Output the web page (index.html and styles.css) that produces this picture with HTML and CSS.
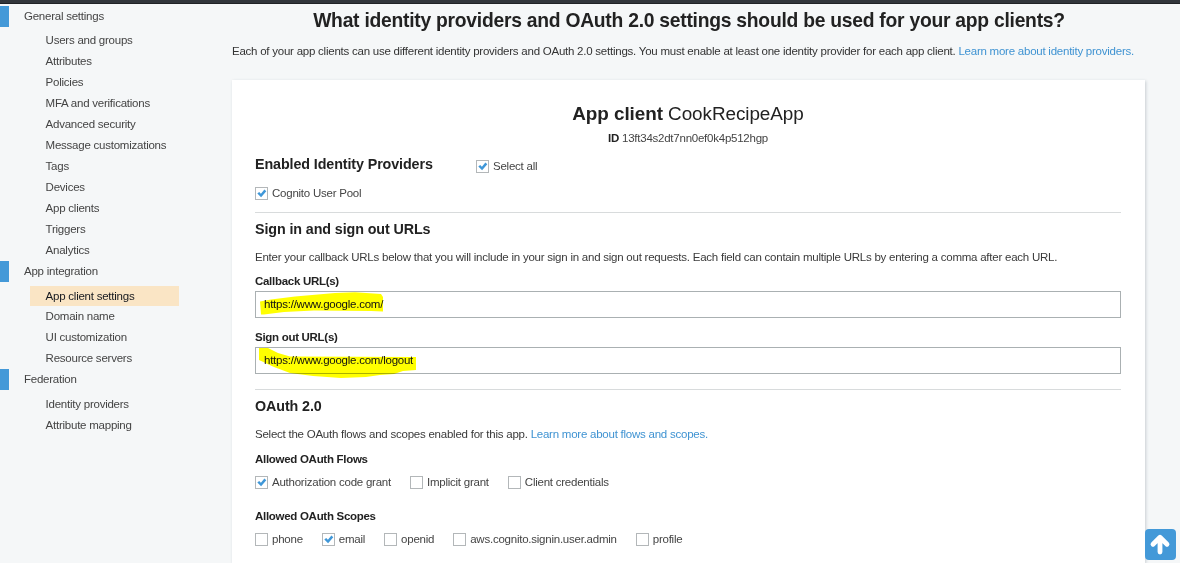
FILE: index.html
```html
<!DOCTYPE html>
<html lang="en">
<head>
<meta charset="utf-8">
<title>App client settings</title>
<link rel="stylesheet" href="styles.css">
</head>
<body>
<svg class="sprite" aria-hidden="true"><symbol id="check" viewBox="0 0 11 11"><path d="M1.300 5.600 3.200 3.900l1.700 1.800L8.400 1.500l1.900 1.700L5.100 9.200z" fill="#3f97d8"/></symbol></svg>
<header class="topbar"></header>
<div class="layout">
  <nav class="sidebar">
    <section class="group">
      <h2 class="group-title">General settings</h2>
      <ul class="menu">
        <li class="item">Users and groups</li>
        <li class="item">Attributes</li>
        <li class="item">Policies</li>
        <li class="item">MFA and verifications</li>
        <li class="item">Advanced security</li>
        <li class="item">Message customizations</li>
        <li class="item">Tags</li>
        <li class="item">Devices</li>
        <li class="item">App clients</li>
        <li class="item">Triggers</li>
        <li class="item">Analytics</li>
      </ul>
    </section>
    <section class="group">
      <h2 class="group-title">App integration</h2>
      <ul class="menu">
        <li class="item active">App client settings</li>
        <li class="item">Domain name</li>
        <li class="item">UI customization</li>
        <li class="item">Resource servers</li>
      </ul>
    </section>
    <section class="group">
      <h2 class="group-title">Federation</h2>
      <ul class="menu">
        <li class="item">Identity providers</li>
        <li class="item">Attribute mapping</li>
      </ul>
    </section>
  </nav>
  <main class="content">
    <h1 class="page-title">What identity providers and OAuth 2.0 settings should be used for your app clients?</h1>
    <p class="intro">Each of your app clients can use different identity providers and OAuth 2.0 settings. You must enable at least one identity provider for each app client. <a class="link">Learn more about identity providers.</a></p>
    <div class="card">
      <h2 class="client-title"><b>App client</b> CookRecipeApp</h2>
      <p class="client-id"><b>ID</b> 13ft34s2dt7nn0ef0k4p512hgp</p>
      <div class="providers-head">
        <h3 class="section-title">Enabled Identity Providers</h3>
        <label class="option"><span class="box"><svg class="tick"><use href="#check"/></svg></span>Select all</label>
      </div>
      <div class="options pool">
        <label class="option"><span class="box"><svg class="tick"><use href="#check"/></svg></span>Cognito User Pool</label>
      </div>
      <section class="section urls">
        <h3 class="section-title">Sign in and sign out URLs</h3>
        <p class="text">Enter your callback URLs below that you will include in your sign in and sign out requests. Each field can contain multiple URLs by entering a comma after each URL.</p>
        <h4 class="label">Callback URL(s)</h4>
        <div class="field">
          <svg class="marker" width="170" height="40" viewBox="0 0 170 40"><path d="M5 9.500 16 7.500 40 4.500 80 1l20-.7 26 1.700 2 3v14.500l-12-.5-57-.5-30 1.500-20 2.500H6z" fill="#ff0"/></svg>
          <span class="value">https://www.google.com/</span>
        </div>
        <h4 class="label">Sign out URL(s)</h4>
        <div class="field">
          <svg class="marker" width="170" height="40" viewBox="0 0 170 40"><path d="M4 0h9l10 5 12 3.500 126 .5v13l-13 1-9 3-14 1-14 2-25 1-28-2-23-3-16-6L4 12z" fill="#ff0"/></svg>
          <span class="value">https://www.google.com/logout</span>
        </div>
      </section>
      <section class="section oauth">
        <h3 class="section-title">OAuth 2.0</h3>
        <p class="text">Select the OAuth flows and scopes enabled for this app. <a class="link">Learn more about flows and scopes.</a></p>
        <h4 class="label">Allowed OAuth Flows</h4>
        <div class="options flows">
          <label class="option"><span class="box"><svg class="tick"><use href="#check"/></svg></span>Authorization code grant</label>
          <label class="option"><span class="box"></span>Implicit grant</label>
          <label class="option"><span class="box"></span>Client credentials</label>
        </div>
        <h4 class="label">Allowed OAuth Scopes</h4>
        <div class="options scopes">
          <label class="option"><span class="box"></span>phone</label>
          <label class="option"><span class="box"><svg class="tick"><use href="#check"/></svg></span>email</label>
          <label class="option"><span class="box"></span>openid</label>
          <label class="option"><span class="box"></span>aws.cognito.signin.user.admin</label>
          <label class="option"><span class="box"></span>profile</label>
        </div>
      </section>
    </div>
  </main>
</div>
<button class="to-top" aria-label="Back to top"><svg width="31" height="31" viewBox="0 0 31 31"><path d="M15 8.500V23M8 15.200l7-7 7 7" fill="none" stroke="#fff" stroke-width="4.800" stroke-linecap="round" stroke-linejoin="round"/></svg></button>
</body>
</html>
```
FILE: styles.css
```css
* { box-sizing: border-box; }
html, body { height: 100%; }
body {
  margin: 0;
  overflow: hidden;
  background: #f5f7f8;
  color: #444;
  font: 11.500px/21px "Liberation Sans", Arial, sans-serif;
  letter-spacing: -.238px;
  white-space: nowrap;
}
h1, h2, h3, h4, p, ul { margin: 0; padding: 0; }
.sprite { display: none; }
.topbar { height: 4px; background: #32363b; border-bottom: 1px solid #202226; }
.layout { display: flex; height: 559px; overflow: hidden; }
.sidebar { width: 232px; flex: none; padding-top: 1.6px; }
.group { padding-bottom: .2px; }
.group-title {
  height: 21px;
  padding-left: 15px;
  border-left: 9px solid #4399d8;
  font-size: 11.500px;
  font-weight: 400;
}
.menu { list-style: none; padding: 3.800px 0 0 30px; }
.item { width: 149px; height: 20.930px; line-height: 20.930px; padding-left: 15.600px; }
.active { background: #fae5c5; color: #16191f; }
.content { width: 914px; flex: none; display: flex; flex-direction: column; }
.page-title { height: 34px; line-height: 34px; font-size: 19.300px; letter-spacing: -.25px; text-align: center; color: #222; }
.intro { margin-top: 3px; height: 39px; line-height: 21px; color: #333; }
.link { color: #3f93d2; }
.card {
  flex: 1;
  width: 913px;
  padding: 21px 24px 0 23px;
  background: #fff;
  box-shadow: 1px 1px 3px #c8ced2;
}
.client-title { height: 26px; line-height: 26px; font-size: 18.900px; letter-spacing: -.07px; font-weight: 400; text-align: center; color: #222; }
.client-id { height: 23px; line-height: 23px; text-align: center; }
.client-id b { color: #222; }
.providers-head { display: flex; height: 27px; align-items: center; }
.providers-head .section-title { width: 221px; }
.providers-head .option { padding-top: 5px; }
.section-title { font-size: 14.300px; letter-spacing: -.1px; line-height: 20px; color: #222; }
.options { display: flex; height: 21px; align-items: center; }
.pool { height: 35px; padding-bottom: 3px; }
.option { display: flex; align-items: center; }
.box { width: 13px; height: 13px; margin-right: 4px; border: 1px solid #b3b7b9; background: #fff; display: grid; place-items: center; }
.tick { width: 11px; height: 11px; }
.section { border-top: 1px solid #d8dbdc; }
.urls { height: 177px; padding-top: 6px; }
.text { margin-top: 8px; color: #3a3a3a; }
.label { font-size: 11.500px; line-height: 21px; color: #222; margin-top: 4px; letter-spacing: -.29px; }
.urls .label { line-height: 20px; margin-top: 3px; }
.urls .field + .label { margin-top: 9px; }
.field { position: relative; height: 27px; border: 1px solid #aab0b2; background: #fff; padding: 0 8px; line-height: 25px; color: #111; }
.marker { position: absolute; left: -1px; top: 0; mix-blend-mode: multiply; }
.value { position: relative; }
.oauth { padding-top: 6px; }
.flows { gap: 19px; margin: 2px 0 13px; }
.scopes { gap: 19px; margin-top: 2px; }
.to-top {
  position: fixed;
  left: 1145px;
  top: 529px;
  width: 31px;
  height: 31px;
  padding: 0;
  border: 0;
  border-radius: 4px;
  background: #4399d8;
  display: grid;
  place-items: center;
}
```
